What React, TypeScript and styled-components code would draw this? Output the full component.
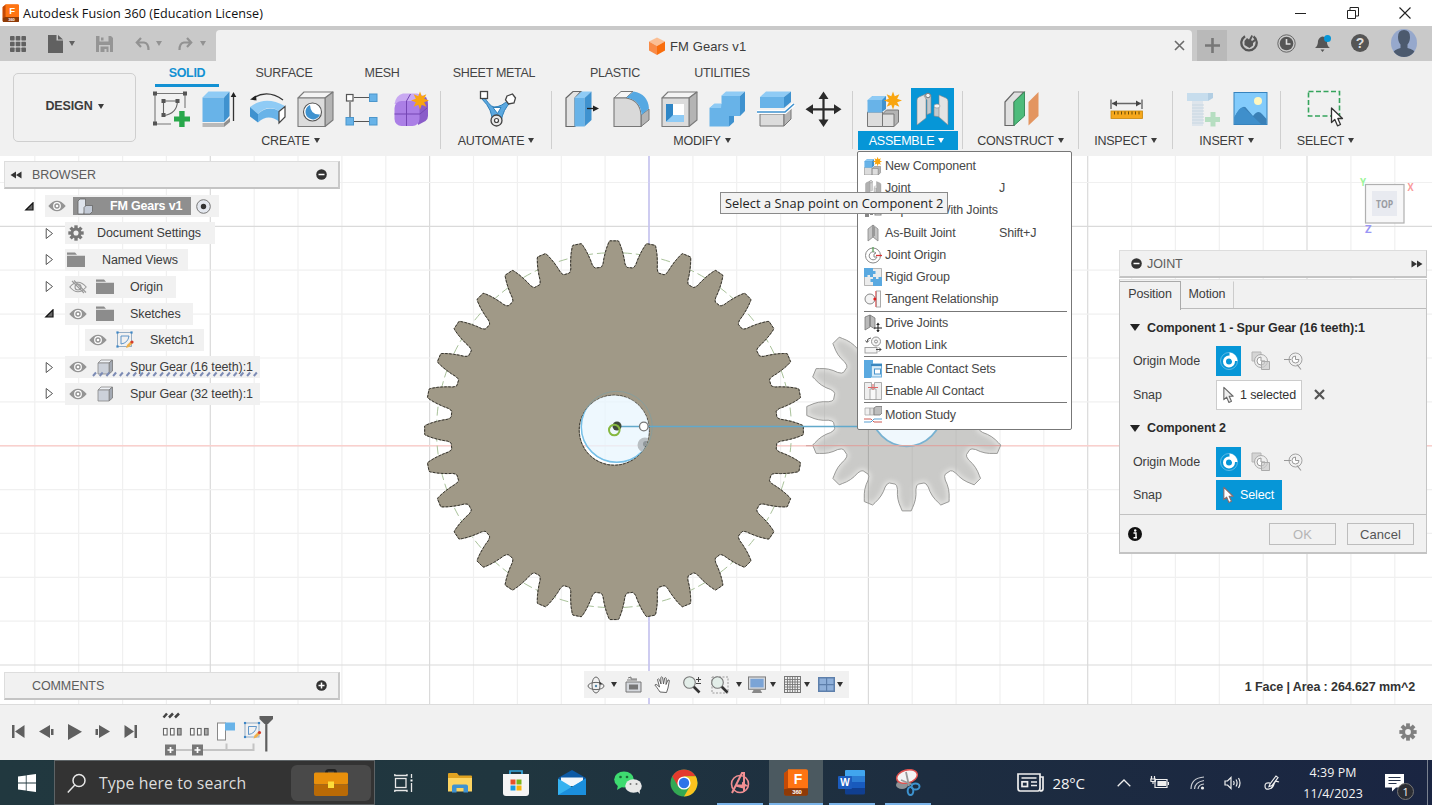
import React from 'react';
import styled, { createGlobalStyle } from 'styled-components';

const UI = '"Liberation Sans", Arial, sans-serif';
const SEGOE = '"Open Sans", "Noto Sans", sans-serif';
const BLUE = '#0696d7';
const SKY = '#68b3e8';

const Global = createGlobalStyle`
  *, *::before, *::after { box-sizing: border-box; }
  body { margin: 0; background: #fff; overflow: hidden; }
  svg { display: block; flex: none; }
`;

const Screen = styled.div`
  width: 1432px;
  height: 805px;
  display: flex;
  flex-direction: column;
  font-family: ${UI};
  font-size: 12.5px;
  letter-spacing: -0.1px;
  color: #3c3c3c;
  white-space: nowrap;
  overflow: hidden;
`;

/* ---------- window title bar ---------- */

const TitleBar = styled.header`
  height: 26px;
  flex: none;
  display: flex;
  align-items: center;
  padding: 0 1px 0 2px;
  background: #fff;
`;

const WindowTitle = styled.span`
  margin-left: 4px;
  font: 12.6px ${SEGOE};
  letter-spacing: 0.05px;
  color: #111;
  flex: 1;
`;

const WindowButton = styled.div`
  width: 52px;
  display: flex;
  justify-content: center;
`;

/* ---------- document bar ---------- */

const DocBar = styled.div`
  height: 35px;
  flex: none;
  display: flex;
  align-items: stretch;
  padding-top: 4px;
  background: #c9c9c9;
`;

const QuickAccess = styled.div`
  width: 216px;
  padding-bottom: 4px;
  display: flex;
  align-items: center;
`;

const QuickSlot = styled.div<{ $w: number }>`
  width: ${p => p.$w}px;
  display: flex;
  justify-content: center;
`;

const DocTab = styled.div`
  width: 976px;
  background: #f1f1f1;
  border-radius: 4px 4px 0 0;
  display: flex;
  align-items: center;
  padding-left: 432px;
`;

const DocName = styled.span`
  margin-left: 4px;
  font-size: 13px;
  letter-spacing: 0.1px;
  width: 504px;
  padding-top: 1px;
`;

const NewTab = styled.div`
  width: 30px;
  margin-left: 5px;
  background: #b9b9b9;
  display: flex;
  align-items: center;
  justify-content: center;
`;

const DocTools = styled.div`
  flex: 1;
  padding-bottom: 5px;
  display: flex;
  align-items: center;
`;

/* ---------- ribbon ---------- */

const Ribbon = styled.div`
  height: 95px;
  flex: none;
  display: flex;
  background: #f1f1f1;
`;

const WorkspaceButton = styled.div`
  width: 123px;
  height: 69px;
  margin: 12px 0 0 13px;
  border: 1.5px solid #cfcfcf;
  border-radius: 5px;
  display: flex;
  align-items: center;
  justify-content: center;
  font-weight: bold;
  font-size: 12.5px;
  letter-spacing: -0.15px;
  padding-bottom: 3px;
`;

const RibbonMain = styled.div`
  display: flex;
  flex-direction: column;
  margin-left: 5px;
`;

const TabRow = styled.div`
  height: 27px;
  display: flex;
  padding-left: 14px;
`;

const RibbonTab = styled.div<{ $w: number; $on?: boolean }>`
  width: ${p => p.$w}px;
  height: 26px;
  display: flex;
  align-items: center;
  justify-content: center;
  letter-spacing: -0.3px;
  padding-top: 1px;
  font-weight: ${p => (p.$on ? 'bold' : 'normal')};
  color: ${p => (p.$on ? '#1391d3' : '#444')};
  border-bottom: 3px solid ${p => (p.$on ? '#1391d3' : 'transparent')};
`;

const Groups = styled.div`
  display: flex;
`;

const Group = styled.div<{ $w: number }>`
  width: ${p => p.$w}px;
  height: 63px;
  display: flex;
  flex-direction: column;
  align-items: center;
  background: linear-gradient(#cfcfcf, #cfcfcf) right 3px / 1.5px 58px no-repeat;
  &:last-child { background: none; }
`;

const IconRow = styled.div`
  height: 43px;
  display: flex;
`;

const GroupLabel = styled.div<{ $on?: boolean }>`
  height: 19px;
  display: flex;
  align-items: center;
  letter-spacing: -0.22px;
  padding-right: 1px;
  color: ${p => (p.$on ? '#fff' : '#3c3c3c')};
  background: ${p => (p.$on ? BLUE : 'none')};
  ${p => (p.$on ? 'width: 100px; justify-content: center; padding-right: 3px;' : '')}
`;

const Caret = styled.i<{ $ml?: number; $s?: number }>`
  width: 0;
  height: 0;
  margin-left: ${p => p.$ml ?? 4}px;
  border: ${p => p.$s ?? 3.5}px solid transparent;
  border-top: ${p => (p.$s ?? 3.5) + 1.5}px solid currentColor;
  border-bottom: 0;
`;

/* ---------- canvas ---------- */

const Canvas = styled.main`
  height: 548px;
  flex: none;
  position: relative;
  background: #fff;
`;

const BrowserPanel = styled.section`
  position: absolute;
  left: 4px;
  top: 5px;
  width: 336px;
`;

const PanelBar = styled.div`
  height: 28px;
  display: flex;
  align-items: center;
  background: #f1f1f1;
  border: 1px solid #ddd;
  border-bottom: 2px solid #c4c4c4;
  border-right: 2px solid #c9c9c9;
  color: #5c5c5c;
  padding: 0 11px 0 5px;
`;

const PanelTitle = styled.span<{ $ml: number }>`
  flex: 1;
  margin-left: ${p => p.$ml}px;
`;

const Tree = styled.div`
  padding-top: 4px;
`;

const TreeRow = styled.div<{ $indent: number }>`
  height: 26.8px;
  display: flex;
  align-items: center;
  padding-left: ${p => p.$indent}px;
`;

const Twisty = styled.span`
  width: 21px;
  display: flex;
`;

const TreeItem = styled.div<{ $w: number }>`
  width: ${p => p.$w}px;
  height: 22px;
  background: #f1f1f1;
  display: flex;
  align-items: center;
  position: relative;
`;

const IconSlot = styled.span<{ $w: number }>`
  width: ${p => p.$w}px;
  display: flex;
  justify-content: center;
  flex: none;
`;

const ActiveName = styled.span`
  width: 118px;
  height: 18px;
  background: #8f8f8f;
  color: #fff;
  font-weight: bold;
  letter-spacing: -0.2px;
  display: flex;
  align-items: center;
`;

const Grounded = styled.svg`
  position: absolute;
  left: 27px;
  bottom: 1px;
`;

const CommentsPanel = styled(PanelBar)`
  position: absolute;
  left: 4px;
  top: 516px;
  width: 336px;
`;

const NavBar = styled.div`
  position: absolute;
  left: 584px;
  top: 515px;
  width: 265px;
  height: 27px;
  background: #f1f1f1;
  display: flex;
  align-items: center;
  color: #333;
`;

const Status = styled.div`
  position: absolute;
  right: 17px;
  top: 524px;
  font-weight: bold;
  line-height: 15px;
  color: #333;
`;

const ViewCube = styled.svg`
  position: absolute;
  left: 1352px;
  top: 16px;
`;

const Menu = styled.ul`
  position: absolute;
  left: 857px;
  top: -5px;
  width: 215px;
  height: 279px;
  margin: 0;
  padding: 2.5px 4px 0 6px;
  list-style: none;
  background: #fff;
  border: 1.5px solid #777;
  border-radius: 2px;
`;

const MenuItem = styled.li`
  height: 22.3px;
  display: flex;
  align-items: center;
  letter-spacing: -0.18px;
  color: #484848;
`;

const MenuText = styled.span`
  width: 114px;
  margin-left: 3px;
`;

const MenuRule = styled.li`
  height: 1px;
  margin-bottom: 0.3px;
  background: #777;
`;

const Tooltip = styled.div`
  position: absolute;
  left: 720px;
  top: 36px;
  width: 228px;
  height: 22px;
  padding-left: 4px;
  background: #f2f2f2;
  border: 1px solid #8a8a8a;
  font: 12.8px/20px ${SEGOE};
  letter-spacing: 0.05px;
  color: #222;
`;

/* ---------- joint dialog ---------- */

const JointPanel = styled.section`
  position: absolute;
  left: 1119px;
  top: 94px;
  width: 308px;
`;

const JointBar = styled(PanelBar)`
  height: 28px;
  border-right-width: 1px;
  padding: 0 3px 0 11px;
`;

const JointBody = styled.div`
  height: 275px;
  margin-top: 1px;
  background: #f1f1f1;
  border: 1px solid #c4c4c4;
  border-top-color: #e2e2e2;
  border-bottom-width: 2px;
`;

const JointTabs = styled.div`
  height: 29px;
  display: flex;
  border-bottom: 1.5px solid #bbb;
`;

const JointTab = styled.div<{ $w: number; $on?: boolean }>`
  width: ${p => p.$w}px;
  height: ${p => (p.$on ? 29 : 27)}px;
  margin-top: 1px;
  border-top: 1px solid ${p => (p.$on ? '#aaa' : 'transparent')};
  border-right: 1px solid ${p => (p.$on ? '#aaa' : '#ccc')};
  background: #f1f1f1;
  display: flex;
  align-items: center;
  justify-content: center;
  padding-bottom: ${p => (p.$on ? 5 : 3)}px;
`;

const Fields = styled.div`
  height: 206px;
  padding-top: 2px;
  border-bottom: 1.5px solid #c2c2c2;
`;

const SectionHead = styled.div`
  height: 33.5px;
  display: flex;
  align-items: center;
  font-weight: bold;
  color: #2b2b2b;
  padding-left: 10px;
`;

const HeadArrow = styled.i`
  border: 5px solid transparent;
  border-top: 7px solid #222;
  border-bottom: 0;
  margin-right: 7px;
`;

const Field = styled.div`
  height: 33.5px;
  display: flex;
  align-items: center;
  padding-left: 13px;
`;

const FieldName = styled.span`
  width: 83px;
`;

const ModeButton = styled.span<{ $on?: boolean }>`
  width: ${p => (p.$on ? 25 : 33)}px;
  height: 30px;
  background: ${p => (p.$on ? BLUE : 'none')};
  padding-left: ${p => (p.$on ? 0 : 6)}px;
  display: flex;
  align-items: center;
  justify-content: center;
`;

const PickButton = styled.span<{ $on?: boolean }>`
  width: ${p => (p.$on ? 66 : 86)}px;
  height: 30px;
  background: ${p => (p.$on ? BLUE : '#fff')};
  color: ${p => (p.$on ? '#fff' : '#333')};
  border: 1px solid ${p => (p.$on ? BLUE : '#ccc')};
  display: flex;
  align-items: center;
  gap: 6px;
  padding-left: 6px;
`;

const ClearPick = styled.svg`
  margin-left: 12px;
`;

const Footer = styled.div`
  height: 38px;
  display: flex;
  align-items: center;
  padding: 0 12px 0 8px;
`;

const DialogButton = styled.span<{ $off?: boolean }>`
  width: 67px;
  height: 22px;
  border: 1.5px solid #bdbdbd;
  margin-left: ${p => (p.$off ? 'auto' : '11px')};
  display: flex;
  align-items: center;
  justify-content: center;
  font-size: 13px;
  letter-spacing: 0.1px;
  color: ${p => (p.$off ? '#b5b5b5' : '#555')};
`;

/* ---------- timeline ---------- */

const Timeline = styled.div`
  height: 56px;
  flex: none;
  display: flex;
  align-items: center;
  background: #f1f1f1;
  border-top: 1px solid #dcdcdc;
  padding: 0 15px 2px 5px;
`;

const Transport = styled.div`
  display: flex;
  width: 155px;
`;

const TransportButton = styled.span`
  width: 28px;
  display: flex;
  justify-content: center;
`;

const Spacer = styled.span`
  flex: 1;
`;

/* ---------- taskbar ---------- */

const Taskbar = styled.footer`
  height: 45px;
  flex: none;
  display: flex;
  background: linear-gradient(90deg, #21383f 0%, #20363f 35%, #1d2d40 65%, #1a2542 100%);
  color: #f4f4f4;
  font-family: ${SEGOE};
`;

const StartButton = styled.div`
  width: 54px;
  display: flex;
  align-items: center;
  justify-content: center;
`;

const SearchBox = styled.div`
  width: 321px;
  border: 1.5px solid #5d6366;
  background: #333;
  display: flex;
  align-items: center;
  padding: 0 3px 0 12px;
  margin-right: 0.6px;
`;

const SearchText = styled.span`
  flex: 1;
  margin-left: 13px;
  font-size: 15.8px;
  letter-spacing: 0.1px;
  color: #ddd;
`;

const SearchArt = styled.span`
  width: 80px;
  height: 36px;
  border-radius: 6px;
  background: #494949;
  display: flex;
  align-items: center;
  justify-content: center;
`;

const TaskSlot = styled.div<{ $open?: boolean; $active?: boolean }>`
  width: 56px;
  position: relative;
  display: flex;
  align-items: center;
  justify-content: center;
  background: ${p => (p.$active ? 'linear-gradient(90deg,transparent 1px,#4b5960 1px,#4b5960 55px,transparent 55px)' : 'none')};
  &::after {
    content: '';
    position: absolute;
    bottom: 0;
    left: ${p => (p.$active ? 1 : 5)}px;
    right: ${p => (p.$active ? 1 : 5)}px;
    height: ${p => (p.$open ? 2.5 : 0)}px;
    background: #7ab3e8;
  }
`;

const Tray = styled.div`
  flex: 1;
  display: flex;
  align-items: center;
  padding-left: 81px;
`;

const Temperature = styled.span`
  width: 57.5px;
  margin-left: 9px;
  font-size: 15px;
  letter-spacing: -0.2px;
`;

const TraySlot = styled.span<{ $w: number }>`
  width: ${p => p.$w}px;
  display: flex;
  justify-content: center;
`;

const Clock = styled.div`
  width: 84px;
  margin-left: -3px;
  text-align: center;
  font-size: 12.4px;
  line-height: 21px;
  letter-spacing: 0.1px;
`;

const Badge = styled.span`
  position: absolute;
  left: 12px;
  top: 9px;
  width: 17px;
  height: 17px;
  border-radius: 50%;
  background: #2b2d33;
  border: 1px solid #777;
  font-size: 11px;
  line-height: 15px;
  text-align: center;
`;

const Notice = styled.div`
  position: relative;
  margin-left: 10px;
  width: 36px;
`;

const ShowDesktop = styled.div`
  width: 5px;
  border-left: 1px solid #7a8290;
`;

/* ---------- drawings ---------- */

const Ico = ({ children, w = 48, h = 42 }: { children: React.ReactNode; w?: number; h?: number }) => (
  <svg width={w} height={h} viewBox={`0 0 ${w} ${h}`} fill="none">{children}</svg>
);

const starPoints = (cx: number, cy: number, R: number, r: number, n = 8) =>
  Array.from({ length: n * 2 }, (_, i) => {
    const a = (Math.PI * i) / n - Math.PI / 2;
    const q = i % 2 ? r : R;
    return `${(cx + q * Math.cos(a)).toFixed(2)},${(cy + q * Math.sin(a)).toFixed(2)}`;
  }).join(' ');

const Star = ({ x, y, r }: { x: number; y: number; r: number }) => (
  <polygon points={starPoints(x, y, r, r * 0.5)} fill="#f9a50f" />
);

const FusionLogo = ({ s }: { s: number }) => (
  <svg width={s} height={s * 1.1} viewBox="0 0 25 27">
    <path d="M1 4l4-3h18a2 2 0 0 1 2 2v19l-3 4H3a2 2 0 0 1-2-2z" fill="#e8590c" />
    <path d="M5 0h18a2 2 0 0 1 2 2v17H5z" fill="#ff7412" />
    <path d="M1 4l4-3v18l-4 1z" fill="#c44a06" />
    <path d="M1 20l4-1h20v5a2 2 0 0 1-2 2.500H3a2 2 0 0 1-2-2z" fill="#8f3a06" />
    <text x="15" y="15" fontFamily="Liberation Sans" fontWeight="bold" fontSize="14" fill="#fff" textAnchor="middle">F</text>
    <text x="14" y="25" fontFamily="Liberation Sans" fontWeight="bold" fontSize="6" fill="#fff" textAnchor="middle">360</text>
  </svg>
);

const SketchIcon = () => (
  <Ico>
    <path d="M8 5.500H38V20M8 5.500V36H24" stroke="#777" strokeWidth="1.100" />
    <path d="M16.500 13H30.500Q30 26 16.500 27.500Z" stroke="#666" strokeWidth="1.100" />
    {[[8, 5.5], [38, 5.5], [8, 35.5], [16.5, 13], [30.5, 13], [16.500, 27]].map(([x, y]) => (
      <rect key={`${x}-${y}`} x={x - 2} y={y - 2} width="4" height="4" fill="#555" />
    ))}
    <path d="M32.200 23h5.400v5.400H43v5.200h-5.400V39h-5.400v-5.400H27v-5.200h5.200z" fill="#28a84b" />
  </Ico>
);

const ExtrudeIcon = () => (
  <Ico>
    <path d="M7.500 35l21.500 0v4H7.500z" fill="#b9b9b9" />
    <path d="M29 35l6-5v4l-6 5z" fill="#8f8f8f" />
    <path d="M7.500 9.500l6-6h21l-5.500 6z" fill="#8fcbf5" />
    <path d="M7.500 9.500H29V34H7.500z" fill={SKY} />
    <path d="M29 9.500l5.500-6V28L29 34z" fill="#3f92cf" />
    <path d="M38.500 33V7" stroke="#333" strokeWidth="1.300" />
    <path d="M38.500 4l2.800 5h-5.600z" fill="#222" />
  </Ico>
);

const RevolveIcon = () => (
  <Ico>
    <path d="M40 12Q25 1 10 10" stroke="#333" strokeWidth="1.300" />
    <path d="M7 11.500l6-4 .5 5z" fill="#222" />
    <path d="M7 19Q22 7 42 18l-6 5Q25 16 15 26z" fill="#8fcbf5" />
    <path d="M7 19l8 7v8.500l-8-6z" fill="#3f92cf" />
    <path d="M15 26Q25 17 36 23v10.500Q25 25 15 34.500z" fill={SKY} />
    <path d="M36 23.500l6-5V29l-6 6z" fill="#fff" stroke="#444" strokeWidth="1.200" />
  </Ico>
);

const GreyBox = () => (
  <g stroke="#7a7a7a" strokeWidth="1.100" strokeLinejoin="round">
    <path d="M7 10l6-6H42L34 10z" fill="#f4f4f4" />
    <path d="M34 10L42 4V32L34 38.500z" fill="#b4b4b4" />
    <path d="M7 10H34V38.500H7z" fill="#dcdcdc" />
  </g>
);

const HoleIcon = () => (
  <Ico>
    <GreyBox />
    <circle cx="21.500" cy="24" r="9" fill="#fff" stroke="#555" strokeWidth="1.100" />
    <path d="M19 17a7.500 7.500 0 1 0 10 9.500Q19.500 27 19 17z" fill="#3f92cf" />
  </Ico>
);

const PatternIcon = () => (
  <Ico>
    <path d="M15 9.500H30M11 14V30M15 33.500H30" stroke="#555" strokeWidth="1.200" />
    <rect x="7.500" y="6.500" width="6.500" height="6.500" fill="#fff" stroke="#555" strokeWidth="1.200" />
    <rect x="30.500" y="6" width="7.500" height="7.500" fill={SKY} stroke="#4b96cc" />
    <rect x="7" y="29.500" width="7.500" height="7.500" fill={SKY} stroke="#4b96cc" />
    <rect x="30.500" y="29.500" width="7.500" height="7.500" fill={SKY} stroke="#4b96cc" />
  </Ico>
);

const FormIcon = () => (
  <Ico>
    <path d="M30 12l9-3q2 3 2 8v11q0 3-2.500 5L31 37z" fill="#8a5cc9" />
    <path d="M7.500 16Q9 7 16 5.500h14q6 1 8 4l-6 6z" fill="#c9a9f2" />
    <rect x="7.500" y="13" width="25" height="25" rx="7" fill="#ab7fe6" />
    <path d="M19.500 13V38M7.500 26H33l7-6M19.500 13l4-7" stroke="#7546b3" />
    <Star x={33} y={12.5} r={9} />
  </Ico>
);

const AutomateIcon = () => (
  <Ico>
    <path d="M11 8Q16 18 21 19Q29 19 36 11L38 14Q30 21 28 34H19Q20 22 9 11z" fill="#5ba8e0" stroke="#2f7fb8" />
    <path d="M20 19.500h8l-3.500 6z" fill="#fff" stroke="#2f7fb8" />
    <rect x="7.500" y="3.500" width="7" height="7" fill="#fff" stroke="#444" strokeWidth="1.300" />
    <path d="M34 8l5.500-2 3 4-1.500 5-5.500 1-3-4z" fill="#fff" stroke="#444" strokeWidth="1.300" />
    <circle cx="23.500" cy="32.500" r="5.500" fill="#e8e8e8" stroke="#444" strokeWidth="1.300" />
    <circle cx="23.500" cy="32.500" r="2" fill="#fff" stroke="#444" strokeWidth="1.200" />
  </Ico>
);

const PressPullIcon = () => (
  <Ico>
    <path d="M7 10l7-6.500h8L16 10V38.500H7z" fill="#e3e3e3" stroke="#666" strokeWidth="1.200" />
    <path d="M15.500 10l7-6.500H32.500l-7 6.500z" fill="#8fcbf5" />
    <path d="M15.500 10h10V38.500h-10z" fill={SKY} />
    <path d="M25.500 10l7-6.500V32l-7 6.500z" fill="#3f92cf" />
    <path d="M28 20.500h8" stroke="#222" strokeWidth="1.300" />
    <path d="M34 17.500l6 3-6 3z" fill="#222" />
  </Ico>
);

const FilletIcon = () => (
  <Ico>
    <path d="M34 27l8-6v11l-8 6.500z" fill="#b4b4b4" stroke="#777" />
    <path d="M7 10l7-6.500H26L19 10z" fill="#f6f6f6" stroke="#777" />
    <path d="M7 10h12Q33 12 34 27V38.500H7z" fill="#d9d9d9" stroke="#777" strokeWidth="1.100" />
    <path d="M19.500 9.500l7-6Q41 6 42 20.500L34.500 27Q34 12.500 19.500 9.500z" fill="#55a8e2" />
  </Ico>
);

const ShellIcon = () => (
  <Ico>
    <GreyBox />
    <rect x="11" y="16" width="18" height="18" fill="#fff" />
    <path d="M11 16h7v12l-7 6z" fill="#2f86c6" />
    <path d="M11 34l7-7h11v7z" fill="#8fcbf5" />
  </Ico>
);

const CombineIcon = () => (
  <Ico>
    <path d="M18 8l5-4.500H42L37 8z" fill="#8fcbf5" />
    <path d="M37 8l5-4.500V23l-5 5H31v6l-5 4.500V28z" fill="#3f92cf" />
    <path d="M6.500 20l5-4h7v-8H37V28H26V38.500H6.500z" fill={SKY} />
    <path d="M6.500 20l5-4.500h7L18 20z" fill="#8fcbf5" />
  </Ico>
);

const SplitIcon = () => (
  <Ico>
    <path d="M9 26h24v12H9z" fill="#dcdcdc" stroke="#777" />
    <path d="M33 26l7-6v11l-7 7z" fill="#b4b4b4" stroke="#777" />
    <path d="M9 9l6-5.500H40L33 9z" fill="#8fcbf5" />
    <path d="M9 9h24v11H9z" fill={SKY} />
    <path d="M33 9l7-5.500V14l-7 6z" fill="#3f92cf" />
    <path d="M6 24H34L43 16" stroke="#fff" strokeWidth="4" />
    <path d="M6 24H34L43 16" stroke="#3f92cf" strokeWidth="1.600" />
  </Ico>
);

const MoveIcon = () => (
  <Ico>
    <path d="M24.500 8V35M11 21.300H38" stroke="#2b2b2b" strokeWidth="2.200" />
    <path d="M24.500 3.500l5 7.500h-10zM24.500 39l5-7.500h-10zM6.500 21.300l7.500-5v10zM42.500 21.300l-7.500-5v10z" fill="#2b2b2b" />
  </Ico>
);

const NewComponentArt = () => (
  <>
    <path d="M7.500 24h15v14.500h-15z" fill="#dcdcdc" stroke="#777" />
    <path d="M22.500 26l4-4H38.500v12l-4.500 4.500H22.500z" fill="#b4b4b4" stroke="#777" />
    <path d="M22.500 26H34V38.500H22.500z" fill="#dedede" stroke="#777" />
    <path d="M7.500 13l5-5H26v13l-4 3z" fill="#3f92cf" />
    <path d="M7.500 12l5-4H26l-4 4z" fill="#8fcbf5" />
    <path d="M7.500 12H22V24.500H7.500z" fill={SKY} />
    <Star x={33} y={12.5} r={9} />
  </>
);

const JointArt = ({ dark }: { dark?: boolean }) => {
  const a = dark ? '#b0b0b0' : '#e3e3e3';
  const b = dark ? '#d0d0d0' : '#c3c9cd';
  return (
    <>
      <path d="M9 12q0-2 2-3l7-3v24l-9 7z" fill={a} stroke="#888" strokeWidth=".6" />
      <path d="M16 8q4-5 7-1v18l-4 1.500V12z" fill={b} stroke="#888" strokeWidth=".6" />
      <circle cx="20" cy="7.500" r="2.300" fill="#f4f4f4" stroke="#777" />
      <path d="M26 20q3-6 6-1v10l-6-1z" fill={b} stroke="#888" strokeWidth=".6" />
      <path d="M31 7l7 3q2 1 2 3v24l-9-8z" fill={a} stroke="#888" strokeWidth=".6" />
      <ellipse cx="29" cy="18" rx="3" ry="2" fill="#f4f4f4" stroke="#888" strokeWidth=".6" />
    </>
  );
};

const JointTileIcon = () => (
  <Ico>
    <rect x="3" y="0" width="43" height="42" fill={BLUE} />
    <JointArt />
  </Ico>
);

const ConstructIcon = () => (
  <Ico>
    <path d="M8 14l9-10h10L17 14V37.500H8z" fill="#e0e0e0" stroke="#666" strokeWidth="1.200" />
    <path d="M17 14L27.500 4V28L17 37.500z" fill="#4dbb7b" stroke="#3a8f5c" />
    <path d="M31.500 14L41.500 4V28l-10 9.500z" fill="#e39560" />
  </Ico>
);

const InspectIcon = () => (
  <Ico>
    <path d="M9 11.500V21M40 11.500V21M10 15.500H39" stroke="#666" strokeWidth="1.400" />
    <path d="M10 15.500l5-3v6zM39 15.500l-5-3v6z" fill="#444" />
    <rect x="9" y="23" width="31.500" height="7.500" fill="#f6a81c" stroke="#c98609" strokeWidth=".8" />
    <path d="M12.500 23.500v3M16 23.500v3M19.500 23.500v3M23 23.500v3M26.500 23.500v3M30 23.500v3M33.500 23.500v3M37 23.500v3" stroke="#6b4c05" />
  </Ico>
);

const BoltIcon = () => (
  <Ico>
    <g opacity=".55">
      <path d="M8 5h21v8H8z" fill="#a5cdea" />
      <path d="M29 5h5v5l-5 3z" fill="#7fb2d8" />
      <path d="M13 13h11v25H13z" fill="#cfdde8" />
      <path d="M13 17h12M13 20h12M13 23h12M13 26h12M13 29h12M13 32h12M13 35h12" stroke="#a9c2d6" />
      <path d="M31.500 24h5v5H41v5h-4.500v4.500h-5V34H26v-5h5.500z" fill="#86cf9a" />
    </g>
  </Ico>
);

const ImageIcon = () => (
  <Ico>
    <rect x="7" y="4.500" width="33" height="32" fill="#83cbfb" stroke="#3783bd" />
    <path d="M7.500 29Q16 14 20 21l6 7q5-7 9-2l4.500 5V36H7.500z" fill="#3a80b7" />
    <path d="M7.500 29Q14 16 18 21l16 15H7.500z" fill="#3f8fcb" />
    <circle cx="31" cy="13" r="4" fill="#fff7c0" />
  </Ico>
);

const CursorShape = ({ x, y, fill = '#fff', stroke = '#333' }: { x: number; y: number; fill?: string; stroke?: string }) => (
  <path transform={`translate(${x} ${y})`} d="M0 0V14.500l3.300-3 2.700 6.300 3-1.300-2.700-6H11z" fill={fill} stroke={stroke} strokeWidth="1.300" strokeLinejoin="round" />
);

const SelectIcon = () => (
  <Ico>
    <rect x="6.500" y="3.500" width="31" height="24.500" stroke="#35a45c" strokeWidth="1.600" strokeDasharray="5 2.500" />
    <CursorShape x={29.5} y={20} />
  </Ico>
);

const Eye = ({ off }: { off?: boolean }) => (
  <svg width="18" height="14" viewBox="0 0 18 14" fill="none">
    {off ? (
      <g stroke="#999" strokeWidth="1.100">
        <path d="M.8 7Q9-2.500 17.200 7Q9 16.500 .8 7z" />
        <circle cx="9" cy="7" r="3" />
        <path d="M3 1l12 12M5 .5l12 12" />
      </g>
    ) : (
      <g>
        <path d="M.3 7Q9-3.500 17.700 7Q9 17.500 .3 7z" fill="#949494" />
        <circle cx="9" cy="7" r="3.300" fill="none" stroke="#fff" strokeWidth="1.200" />
        <circle cx="9" cy="7" r="1.300" fill="#fff" />
      </g>
    )}
  </svg>
);

const Folder = () => (
  <svg width="18" height="15" viewBox="0 0 18 15"><path d="M0 .5h8l2 2.300H0zM0 3.800h18V15H0z" fill="#8c8c8c" /></svg>
);

const Gear = ({ s, c = '#777' }: { s: number; c?: string }) => (
  <svg width={s} height={s} viewBox="-10 -10 20 20">
    {[0, 45, 90, 135].map(a => <rect key={a} x="-2.100" y="-9.600" width="4.200" height="19.200" fill={c} transform={`rotate(${a})`} />)}
    <circle r="6.800" fill={c} /><circle r="3.200" fill="#f1f1f1" />
  </svg>
);

const Body = () => (
  <svg width="17" height="16" viewBox="0 0 17 16">
    <path d="M1 4l3-3h11l-3 3z" fill="#eef1f5" stroke="#888" strokeWidth=".8" />
    <path d="M12 4l3.500-3v11L12 15z" fill="#a3a9b3" stroke="#777" strokeWidth=".8" />
    <path d="M1 4h11v11H1z" fill="#ccd1da" stroke="#888" strokeWidth=".8" />
  </svg>
);

const AssemblyIcon = () => (
  <svg width="17" height="17" viewBox="0 0 17 17">
    <path d="M1 3l2-2h5.500v7L7 16H1z" fill="#dfe4ec" stroke="#666" strokeWidth=".8" />
    <path d="M7 9.500l2-2h6.500V13.500L13 16H7z" fill="#c3cad6" stroke="#666" strokeWidth=".8" />
  </svg>
);

const SketchSmall = () => (
  <svg width="18" height="18" viewBox="0 0 18 18" fill="none">
    <rect x="1.500" y="1.500" width="14" height="14" stroke="#8aa6c0" strokeWidth=".9" />
    <path d="M5 5h8Q12 12 5 13z" stroke="#4f8bc4" strokeWidth=".9" />
    {[[1.5, 1.5], [15.5, 1.5], [1.5, 15.5]].map(([x, y]) => <rect key={`${x}${y}`} x={x - 1.1} y={y - 1.1} width="2.200" height="2.200" fill="#3d86c6" />)}
    <path d="M10 17l1-3 4-4 2 2-4 4z" fill="#efb04a" /><circle cx="16" cy="11" r="1.600" fill="#d43c2c" />
  </svg>
);

const ArrowClosed = () => (
  <svg width="10" height="13" viewBox="-1 0 10 13"><path d="M1.200 1.500L7.500 6.500L1.200 11.500z" fill="#fff" stroke="#555" /></svg>
);
const ArrowOpen = () => (
  <svg width="10" height="9" viewBox="-1 0 10 9"><path d="M8 .8V8H.8z" fill="#666" stroke="#111" strokeWidth="1.200" /></svg>
);

const RoundSign = ({ plus }: { plus?: boolean }) => (
  <svg width="11" height="11" viewBox="0 0 11 11"><circle cx="5.500" cy="5.500" r="5.300" fill="#333" /><path d={plus ? 'M2.500 5.500h6M5.500 2.500v6' : 'M2.500 5.500h6'} stroke="#fff" strokeWidth="1.500" /></svg>
);

const DoubleArrow = ({ flip }: { flip?: boolean }) => (
  <svg width="12" height="8" viewBox="0 0 12 8"><path transform={flip ? 'translate(12 0) scale(-1 1)' : undefined} d="M6 .5v7L.5 4zM11.500 .5v7L6 4z" fill="#333" /></svg>
);

/* Outline of a spur gear: each tooth is a list of (radius, half width) pairs. */
const gearPath = (cx: number, cy: number, teeth: number, profile: number[][]) => {
  const pts: string[] = [];
  for (let i = 0; i < teeth; i++) {
    const base = -Math.PI / 2 + (i * 2 * Math.PI) / teeth;
    const side = (s: number) => ([r, w]: number[]) => {
      const a = base + s * Math.asin(w / r);
      pts.push(`${(cx + r * Math.cos(a)).toFixed(2)} ${(cy + r * Math.sin(a)).toFixed(2)}`);
    };
    profile.forEach(side(-1));
    [...profile].reverse().forEach(side(1));
  }
  return `M${pts.join('L')}Z`;
};

const BIG = gearPath(614, 430.2, 32, [
  [163.3, 13.2], [164.5, 12], [167, 10.9], [172, 10.100], [177.500, 8.800], [182, 7.500], [186, 6], [188.4, 5], [189.4, 4.200],
]);
const SMALL = gearPath(906.7, 411, 16, [
  [74, 11.5], [75.5, 10], [79, 9.2], [84, 9.3], [88.8, 8.700], [93, 7.500], [97, 5.800], [100, 4.500],
]);
const circlePath = (x: number, y: number, r: number) => `M${x - r} ${y}a${r} ${r} 0 1 0 ${2 * r} 0a${r} ${r} 0 1 0 ${-2 * r} 0Z`;

const Model = () => {
  const step = 43.87;
  const vs = Array.from({ length: 33 }, (_, i) => i - 14);
  const hs = Array.from({ length: 12 }, (_, i) => i - 6);
  return (
    <svg width="1432" height="548" viewBox="0 156 1432 548" fill="none">
      <defs>
        <clipPath id="small-clip"><path d={SMALL} /></clipPath>
        <clipPath id="bore-clip"><circle cx="614.200" cy="430.200" r="35" /></clipPath>
        <filter id="soft" x="-10%" y="-10%" width="120%" height="120%"><feGaussianBlur stdDeviation="2" /></filter>
      </defs>
      {vs.map(i => <path key={`v${i}`} d={`M${(649 + i * step).toFixed(1)} 156V704`} stroke={i % 5 ? '#f0f0f0' : '#dadada'} strokeWidth="1.200" />)}
      {hs.map(i => <path key={`h${i}`} d={`M0 ${(445.7 + i * step).toFixed(1)}H1432`} stroke={i % 5 ? '#f0f0f0' : '#dadada'} strokeWidth="1.200" />)}
      <path d="M649 156V704" stroke="#bdb9f6" strokeWidth="1.200" />
      <path d="M0 445.700H1432" stroke="#fad0cd" strokeWidth="1.500" />

      <circle cx="614" cy="430.200" r="177.500" stroke="#a9c29a" strokeDasharray="9 4" />
      <path d={BIG + circlePath(614.2, 430.2, 35)} fillRule="evenodd" fill="#a09987" stroke="#7d7769" strokeWidth=".8" />
      <path d={BIG + circlePath(614.2, 430.2, 35)} stroke="#2e2c26" strokeWidth=".9" strokeDasharray="2.500 1.500" />
      <circle cx="616.800" cy="426.800" r="35.500" stroke="#6f9fae" strokeOpacity=".5" />
      <g clipPath="url(#bore-clip)">
        <circle cx="616.800" cy="426.800" r="35.500" fill="#e8f5fd" fillOpacity=".75" stroke="#76c0e8" strokeWidth="1.500" />
        <circle cx="645" cy="445" r="7.500" fill="#b9bfc3" />
        <circle cx="646" cy="444" r="3" fill="#8f9699" />
      </g>

      <path d={SMALL} fill="#c7c7c5" fillOpacity=".95" />
      <g clipPath="url(#small-clip)">
        <path d={SMALL} stroke="#e2e2e0" strokeWidth="5" filter="url(#soft)" />
        <path d="M868.400 300V520" stroke="#a2a2a0" strokeOpacity=".8" />
        <path d="M824.500 300V520M912.300 300V520M956 300V520" stroke="#bdbdbb" strokeOpacity=".6" />
      </g>
      <path d={SMALL} stroke="#9b9b99" />
      <circle cx="906.700" cy="411" r="35.300" fill="#f0f8fd" stroke="#77b2d2" strokeWidth="1.800" />
      <path d="M806 445.700H1000" stroke="#dba7a3" strokeWidth="1.200" />

      <path d="M620 426.500H907" stroke="#62a9cb" strokeWidth="1.500" />
      <circle cx="643.800" cy="426.500" r="4.300" fill="#fff" stroke="#777" strokeWidth="1.300" />
      <circle cx="617" cy="426" r="4.500" fill="#3f4a3a" />
      <circle cx="614.300" cy="430" r="5.300" stroke="#86b840" strokeWidth="2" />
    </svg>
  );
};

const menuGlyphs: Record<string, React.ReactNode> = {
  comp: <g transform="translate(-3.500 -2) scale(.52)"><NewComponentArt /></g>,
  joint: <g transform="translate(-3 -1) scale(.5)"><JointArt dark /></g>,
  dup: <><path d="M1 7h4v9H1zM6 8h3v6H6z" fill="#888" /><rect x="11" y="9" width="6" height="5" fill="#ddd" stroke="#888" /></>,
  built: <><path d="M4 5l5-4v12l-5 4zM9 1l5 4v12l-5-4z" fill="#c4c4c4" stroke="#888" strokeWidth=".8" /><path d="M8 3h3v9H8z" fill="#999" /></>,
  origin: <><circle cx="9" cy="9.500" r="7.500" stroke="#888" fill="#fff" /><path d="M12 7a4 4 0 1 0 1 4h-3V8z" stroke="#888" fill="#fff" /><path d="M9 1v5" stroke="#5aa35a" strokeWidth="1.300" /><path d="M12 9.500h6" stroke="#d33" strokeWidth="1.300" /></>,
  rigid: <><path d="M.5.500H17.500V17.500H.5z" fill="#ececec" stroke="#999" strokeWidth=".7" /><path d="M0 0h9v3h2.500v3H9v3H6V7H3.500v2H0z" fill="#5aa9e0" /><path d="M9 18v-4H6.500v-3H9V9h3v2h2.500V9H18v9z" fill="#5aa9e0" /></>,
  tangent: <><circle cx="6" cy="9" r="5" fill="#f4f4f4" stroke="#888" /><rect x="12.500" y="1" width="4" height="16" fill="#f4f4f4" stroke="#aaa" /><path d="M11.800 1v16" stroke="#e05a5a" /><circle cx="10.800" cy="9" r="1.500" fill="#d22" /></>,
  drive: <><path d="M1 3l5-2v12l-5 3zM6 1l5 3v11l-5-3z" fill="#b9b9b9" stroke="#777" strokeWidth=".8" /><path d="M14 10v8M10 14h8" stroke="#222" strokeWidth="1.100" /><path d="M14 8.500l1.800 2.500h-3.600zM14 18l1.800-2h-3.600z" fill="#222" /></>,
  link: <><circle cx="12" cy="5.500" r="4.500" fill="#f4f4f4" stroke="#888" strokeWidth=".9" /><circle cx="12" cy="5.500" r="1.500" stroke="#888" strokeWidth=".9" /><path d="M3 6q0-4 4-4M1.500 4.500L3 6.500l2-2" stroke="#444" strokeWidth=".9" /><rect x="1" y="11.500" width="12" height="5.500" fill="#f4f4f4" stroke="#999" strokeWidth=".9" /><path d="M12 13.500h5M15 11.500l2 2-2 2" stroke="#333" strokeWidth=".9" /></>,
  sets: <><path d="M0 0h9v4H7v14H0z" fill="#5aa9e0" /><rect x="7.500" y="4" width="10" height="13" fill="#d8ecf8" stroke="#6aaedb" /><rect x="10.500" y="9" width="6" height="5" fill="#fff" stroke="#4a95cc" /><path d="M7 5h11" stroke="#3a86bd" strokeWidth="2.200" /></>,
  all: <><path d="M.5.500h7v17h-7zM10.500.500h7v17h-7z" fill="#efefef" stroke="#999" strokeWidth=".8" /><path d="M6 7h6v10.500H6z" fill="#f8f8f8" stroke="#999" strokeWidth=".8" /><path d="M4 5.500h10M9 2v6" stroke="#d66" strokeWidth="1.100" /></>,
  study: <><path d="M1 2h5v7H1z" fill="#f0f0f0" stroke="#aaa" strokeWidth=".8" /><path d="M6 2h4v7H6z" fill="#ddd" stroke="#aaa" strokeWidth=".8" /><path d="M10 2l2-1.500h6V7l-2 2h-6z" fill="#bdbdbd" stroke="#777" strokeWidth=".8" /><path d="M0 13h7l3 3h8" stroke="#cc5b55" /><path d="M0 16h7l3-3h8" stroke="#5a9fd0" /></>,
};

const menuItems: ([string, string, string?] | null)[] = [
  ['comp', 'New Component'], ['joint', 'Joint', 'J'], ['dup', 'Duplicate With Joints'], ['built', 'As-Built Joint', 'Shift+J'],
  ['origin', 'Joint Origin'], ['rigid', 'Rigid Group'], ['tangent', 'Tangent Relationship'], null,
  ['drive', 'Drive Joints'], ['link', 'Motion Link'], null, ['sets', 'Enable Contact Sets'], ['all', 'Enable All Contact'], null,
  ['study', 'Motion Study'],
];

const OriginModes = () => (
  <>
    <ModeButton $on>
      <svg width="20" height="20" viewBox="0 0 20 20" fill="none"><circle cx="10" cy="10" r="8.500" stroke="#5cb9e6" /><circle cx="10" cy="10.500" r="4.500" stroke="#fff" strokeWidth="3" /><path d="M10.500 1.500a8.500 8.500 0 0 1 8 8.500H13q-.5-2.500-2.500-3z" fill="#fff" /></svg>
    </ModeButton>
    <ModeButton>
      <svg width="20" height="20" viewBox="0 0 20 20" fill="none"><path d="M1 1h9v9H1z" fill="#d5d5d5" stroke="#b5b5b5" /><circle cx="10" cy="10" r="6.500" fill="#eee" stroke="#aaa" /><path d="M10 6a4 4 0 1 0 4 4h-4z" fill="#fff" stroke="#999" /><path d="M10.500 10.500h8v8h-8z" fill="#ccc" fillOpacity=".7" stroke="#aaa" /></svg>
    </ModeButton>
    <ModeButton>
      <svg width="20" height="20" viewBox="0 0 20 20" fill="none"><circle cx="11.500" cy="8.500" r="6.500" stroke="#999" strokeWidth=".9" /><path d="M11.500 5a3.500 3.500 0 1 0 3.500 3.500H11.500z" fill="#fff" stroke="#999" /><path d="M0 8.500h7M13 13.500l4 5" stroke="#999" strokeWidth="1.100" /></svg>
    </ModeButton>
  </>
);

const tree: { indent: number; arrow?: 'open' | 'closed'; w: number; eye?: 'on' | 'off'; icon: React.ReactNode; gap: number; text: string; grounded?: boolean }[] = [
  { indent: 40, arrow: 'closed', w: 150, icon: <Gear s={16} />, gap: 10, text: 'Document Settings' },
  { indent: 40, arrow: 'closed', w: 123, icon: <Folder />, gap: 15, text: 'Named Views' },
  { indent: 40, arrow: 'closed', w: 111, eye: 'off', icon: <Folder />, gap: 15, text: 'Origin' },
  { indent: 40, arrow: 'open', w: 128, eye: 'on', icon: <Folder />, gap: 15, text: 'Sketches' },
  { indent: 60, w: 119, eye: 'on', icon: <SketchSmall />, gap: 15, text: 'Sketch1' },
  { indent: 40, arrow: 'closed', w: 195, eye: 'on', icon: <Body />, gap: 15, text: 'Spur Gear (16 teeth):1', grounded: true },
  { indent: 40, arrow: 'closed', w: 195, eye: 'on', icon: <Body />, gap: 15, text: 'Spur Gear (32 teeth):1' },
];

const ribbonTabs: [string, number][] = [['SOLID', 64], ['SURFACE', 130], ['MESH', 66], ['SHEET METAL', 158], ['PLASTIC', 84], ['UTILITIES', 130]];

const groups: { name: string; w: number; icons: React.FC[]; on?: boolean }[] = [
  { name: 'CREATE', w: 300, icons: [SketchIcon, ExtrudeIcon, RevolveIcon, HoleIcon, PatternIcon, FormIcon] },
  { name: 'AUTOMATE', w: 111, icons: [AutomateIcon] },
  { name: 'MODIFY', w: 301, icons: [PressPullIcon, FilletIcon, ShellIcon, CombineIcon, SplitIcon, MoveIcon] },
  { name: 'ASSEMBLE', w: 110, icons: [() => <Ico><NewComponentArt /></Ico>, JointTileIcon], on: true },
  { name: 'CONSTRUCT', w: 116, icons: [ConstructIcon] },
  { name: 'INSPECT', w: 94, icons: [InspectIcon] },
  { name: 'INSERT', w: 108, icons: [BoltIcon, ImageIcon] },
  { name: 'SELECT', w: 90, icons: [SelectIcon] },
];

const Loupe = ({ frame }: { frame?: boolean }) => (
  <svg width="20" height="20" viewBox="0 0 20 20" fill="none">
    {frame && <rect x="2" y="2" width="16" height="16" stroke="#999" strokeDasharray="2 1.500" />}
    <path d="M11.500 11.500l6 6" stroke="#333" strokeWidth="2.600" />
    <circle cx="7.500" cy="7.500" r="5.800" fill="#e3eee9" stroke="#777" strokeWidth="1.100" />
    {!frame && <path d="M14 4.500h5M16.500 2v5M14 8.500h5" stroke="#444" strokeWidth="1" />}
  </svg>
);

const DarkCaret = styled(Caret)` color: #616161; `;
const PaleCaret = styled(Caret)` color: #929292; `;

export default function App() {
  return (
    <Screen>
      <Global />
      <TitleBar>
        <FusionLogo s={17} />
        <WindowTitle>Autodesk Fusion 360 (Education License)</WindowTitle>
        <WindowButton><svg width="12" height="12" viewBox="0 0 12 12"><path d="M0 6.500h11" stroke="#222" /></svg></WindowButton>
        <WindowButton><svg width="12" height="12" viewBox="0 0 12 12" fill="none" stroke="#222"><path d="M.5 3.500h8v8h-8zM3 3V.500h8.500V9H9" /></svg></WindowButton>
        <WindowButton><svg width="12" height="12" viewBox="0 0 12 12"><path d="M.5.500l11 11M11.500.500l-11 11" stroke="#222" strokeWidth="1.100" /></svg></WindowButton>
      </TitleBar>

      <DocBar>
        <QuickAccess>
          <QuickSlot $w={36}><svg width="16" height="16" viewBox="0 0 16 16" fill="#616161">{[0, 5.7, 11.4].map(y => [0, 5.700, 11.400].map(x => <rect key={`${x}${y}`} x={x} y={y} width="4.600" height="4.600" rx=".8" />))}</svg></QuickSlot>
          <QuickSlot $w={38}><svg width="15" height="18" viewBox="0 0 15 18" fill="#616161"><path d="M0 0h8.500v5.500H15V18H0zM10 0l5 4.500h-5z" /></svg></QuickSlot>
          <DarkCaret $ml={-5} />
          <QuickSlot $w={59}><svg width="17" height="16" viewBox="0 0 17 16"><path d="M0 0h15l2 2v14H0z" fill="#959595" /><path d="M3.500 0h9v5.500h-9zM3 9h11v7H3z" fill="#c9c9c9" /><path d="M5 1.500h2.500v3H5zM4.500 10.500h8V16h-2v-3h-2v3h-4z" fill="#959595" /></svg></QuickSlot>
          <QuickSlot $w={17}><svg width="15" height="14" viewBox="0 0 15 14" fill="none" stroke="#929292" strokeWidth="2.200"><path d="M6 1L1.800 5.500L6 10M2 5.500H9Q13.500 6 13.500 13" /></svg></QuickSlot>
          <PaleCaret $ml={5} />
          <QuickSlot $w={46}><svg width="15" height="14" viewBox="0 0 15 14" fill="none" stroke="#929292" strokeWidth="2.200"><path d="M9 1l4.200 4.500L9 10M13 5.500H6Q1.500 6 1.500 13" /></svg></QuickSlot>
          <PaleCaret $ml={-8.5} />
        </QuickAccess>
        <DocTab>
          <svg width="18" height="18" viewBox="0 0 18 18"><path d="M9 .5l8 4-8 4.500-8-4.500z" fill="#fbbf94" /><path d="M1 4.500L9 9v9l-8-4.500z" fill="#f98b47" /><path d="M17 4.500L9 9v9l8-4.500z" fill="#f96d0c" /></svg>
          <DocName>FM Gears v1</DocName>
          <svg width="11" height="11" viewBox="0 0 11 11"><path d="M1 1l9 9M10 1L1 10" stroke="#6b6b6b" strokeWidth="1.600" /></svg>
        </DocTab>
        <NewTab><svg width="15" height="15" viewBox="0 0 15 15"><path d="M7.500 0v15M0 7.500h15" stroke="#777" strokeWidth="2.600" /></svg></NewTab>
        <DocTools>
          <QuickSlot $w={44}><svg width="18" height="18" viewBox="0 0 18 18" fill="none"><path d="M5 2.200A7.700 7.700 0 1 0 13.500 2.500" stroke="#555" strokeWidth="2.300" /><path d="M4.500 11V7l2.500-3 2 1.500L11.500 1 13 2l-2 4 1 1 3.500-2.500 1 1.500-3.500 3v2.500L9.500 14z" fill="#555" /></svg></QuickSlot>
          <QuickSlot $w={30}><svg width="19" height="19" viewBox="0 0 19 19" fill="none"><circle cx="9.500" cy="9.500" r="8.700" stroke="#666" /><circle cx="9.500" cy="9.500" r="6.800" fill="#555" /><path d="M9.500 5v5h4" stroke="#ddd" strokeWidth="1.600" /></svg></QuickSlot>
          <QuickSlot $w={44}><svg width="18" height="19" viewBox="0 0 18 19"><path d="M1 14q3-2 3-7 1-4 4.500-4.500Q13 3 13 8q0 4 3 6zM6.500 15.500h4l-2 2.500z" fill="#555" /><circle cx="13.500" cy="4.500" r="3.500" fill={BLUE} /></svg></QuickSlot>
          <QuickSlot $w={30}><svg width="18" height="18" viewBox="0 0 18 18"><circle cx="9" cy="9" r="9" fill="#555" /><text x="9" y="14" fontSize="14" fontWeight="bold" fontFamily="Liberation Sans" textAnchor="middle" fill="#ddd">?</text></svg></QuickSlot>
          <QuickSlot $w={57}><svg width="26" height="28" viewBox="0 0 26 28"><defs><clipPath id="av"><ellipse cx="13" cy="14" rx="13" ry="14" /></clipPath></defs><g clipPath="url(#av)"><rect width="26" height="28" fill="#96a8cc" /><path d="M13 1q6 0 6 7 0 5-2.500 7.500V19q7 1.500 8.500 6v3H1v-3q2-4.500 8.500-6v-3.500Q7 13 7 8q0-7 6-7z" fill="#4c5a6e" /></g></svg></QuickSlot>
        </DocTools>
      </DocBar>

      <Ribbon>
        <WorkspaceButton>DESIGN<Caret $ml={5} /></WorkspaceButton>
        <RibbonMain>
          <TabRow>{ribbonTabs.map(([t, w], i) => <RibbonTab key={t} $w={w} $on={i === 0}>{t}</RibbonTab>)}</TabRow>
          <Groups>
            {groups.map(g => (
              <Group key={g.name} $w={g.w}>
                <IconRow>{g.icons.map((I, i) => <I key={i} />)}</IconRow>
                <GroupLabel $on={g.on}>{g.name}<Caret /></GroupLabel>
              </Group>
            ))}
          </Groups>
        </RibbonMain>
      </Ribbon>

      <Canvas>
        <Model />

        <BrowserPanel>
          <PanelBar><DoubleArrow /><PanelTitle $ml={10}>BROWSER</PanelTitle><RoundSign /></PanelBar>
          <Tree>
            <TreeRow $indent={20}>
              <Twisty><ArrowOpen /></Twisty>
              <TreeItem $w={174}>
                <IconSlot $w={24}><Eye /></IconSlot>
                <IconSlot $w={4}>{null}</IconSlot>
                <ActiveName><IconSlot $w={24}><AssemblyIcon /></IconSlot><IconSlot $w={13}>{null}</IconSlot>FM Gears v1</ActiveName>
                <IconSlot $w={25}><svg width="15" height="15" viewBox="0 0 15 15"><circle cx="7.500" cy="7.500" r="6.800" fill="#e4e8ef" stroke="#777" /><circle cx="7.500" cy="7.500" r="2.700" fill="#333" /></svg></IconSlot>
              </TreeItem>
            </TreeRow>
            {tree.map(n => (
              <TreeRow key={n.text} $indent={n.indent}>
                <Twisty>{n.arrow === 'closed' ? <ArrowClosed /> : n.arrow === 'open' ? <ArrowOpen /> : null}</Twisty>
                <TreeItem $w={n.w}>
                  {n.eye && <IconSlot $w={25}><Eye off={n.eye === 'off'} /></IconSlot>}
                  <IconSlot $w={n.eye ? 30 : 22}>{n.icon}</IconSlot>
                  <IconSlot $w={n.eye ? 10 : n.gap}>{null}</IconSlot>
                  {n.text}
                  {n.grounded && (
                    <Grounded width="168" height="6" viewBox="0 0 168 6">
                      {Array.from({ length: 25 }, (_, i) => <path key={i} d={`M${i * 6.7 + 1} 5l3-3.500`} stroke="#7c8bb5" strokeWidth="2" />)}
                    </Grounded>
                  )}
                </TreeItem>
              </TreeRow>
            ))}
          </Tree>
        </BrowserPanel>

        <CommentsPanel><PanelTitle $ml={22}>COMMENTS</PanelTitle><RoundSign plus /></CommentsPanel>

        <NavBar>
          <IconSlot $w={24}><svg width="18" height="18" viewBox="0 0 18 18" fill="none" stroke="#666"><ellipse cx="9" cy="10" rx="8" ry="3.600" /><ellipse cx="9" cy="9" rx="4" ry="8" /><path d="M12.500 5.500l3 3h-3z" fill="#333" stroke="none" /><circle cx="9" cy="10" r="1.200" fill="#58a" stroke="none" /></svg></IconSlot>
          <IconSlot $w={12}><Caret $ml={0} /></IconSlot>
          <IconSlot $w={27}><svg width="17" height="17" viewBox="0 0 17 17" fill="none"><path d="M1 6h15v10H1z" fill="#d5d8dd" stroke="#777" /><path d="M4 8.500h9v5H4z" fill="#777" /><path d="M2 4h10M3 2l3-1v2h6" stroke="#777" /></svg></IconSlot>
          <IconSlot $w={31}><svg width="18" height="18" viewBox="0 0 18 18"><path d="M6 16Q2 10 .8 9q1-1.500 3 .5L5.500 11 3.500 3.500q1-1.200 2 .2L7 8 6.800 1.500q1-1.300 1.800 0L9.500 8l1.200-6q1.200-.9 1.600.4L12 8.500l2-4.500q1.400-.5 1.300 1L14 12l-1.500 4.500z" fill="#fff" stroke="#555" strokeWidth=".9" /></svg></IconSlot>
          <IconSlot $w={28}><Loupe /></IconSlot>
          <IconSlot $w={28}><Loupe frame /></IconSlot>
          <IconSlot $w={10}><Caret $ml={0} /></IconSlot>
          <IconSlot $w={25}><svg width="18" height="18" viewBox="0 0 19 18"><rect x=".5" y=".5" width="18" height="13" fill="#d5d8dd" stroke="#777" /><rect x="2.500" y="2.500" width="14" height="9" fill="#7ba4d6" /><path d="M6 14h7l2 3.500H4z" fill="#888" /></svg></IconSlot>
          <IconSlot $w={8}><Caret $ml={-1} /></IconSlot>
          <IconSlot $w={31}><svg width="17" height="17" viewBox="0 0 17 17" fill="none"><rect x=".5" y=".5" width="16" height="16" fill="#eee" stroke="#777" /><path d="M3.500 0v17M6 0v17M8.500 0v17M11 0v17M13.500 0v17M0 3.500h17M0 6h17M0 8.500h17M0 11h17M0 13.500h17" stroke="#777" strokeWidth=".9" /></svg></IconSlot>
          <IconSlot $w={5}><Caret $ml={-8} /></IconSlot>
          <IconSlot $w={26}><svg width="17" height="15" viewBox="0 0 17 15"><rect width="17" height="15" fill="#5d7fab" /><path d="M1.500 1.500H8V7H1.500zM9.200 1.500h6.300V7H9.200zM1.500 8.200H8v5.300H1.500zM9.200 8.200h6.300v5.300H9.200z" fill="#8fb0da" /></svg></IconSlot>
          <IconSlot $w={4}><Caret $ml={-2} /></IconSlot>
        </NavBar>

        <Status>1 Face | Area : 264.627 mm^2</Status>

        <ViewCube width="64" height="66" viewBox="0 0 64 66" fontFamily="Open Sans" fill="none">
          <rect x="13.500" y="12.500" width="38.500" height="38.500" fill="#f7f7f8" stroke="#b0b0b0" strokeWidth="1.200" />
          <rect x="20" y="19" width="25" height="25" fill="#e8eaf0" />
          <text x="24" y="35.500" fontSize="10" fontWeight="bold" fill="#9a9ca2" textLength="17" lengthAdjust="spacingAndGlyphs">TOP</text>
          <g fontSize="10.500" fontWeight="bold">
            <text x="8" y="14" fill="#9df59a" textLength="6" lengthAdjust="spacingAndGlyphs">Y</text>
            <text x="55.500" y="19" fill="#f99a9a" textLength="6" lengthAdjust="spacingAndGlyphs">X</text>
            <text x="13" y="61" fill="#9a97f5" textLength="6.500" lengthAdjust="spacingAndGlyphs">Z</text>
          </g>
        </ViewCube>

        <Menu>
          {menuItems.map((m, i) => m ? (
            <MenuItem key={m[1]}>
              <svg width="18" height="18" viewBox="0 0 18 18" fill="none">{menuGlyphs[m[0]]}</svg>
              <MenuText>{m[1]}</MenuText>
              {m[2]}
            </MenuItem>
          ) : <MenuRule key={i} />)}
        </Menu>
        <Tooltip>Select a Snap point on Component 2</Tooltip>

        <JointPanel>
          <JointBar><RoundSign /><PanelTitle $ml={5}>JOINT</PanelTitle><DoubleArrow flip /></JointBar>
          <JointBody>
            <JointTabs><JointTab $w={61} $on>Position</JointTab><JointTab $w={53}>Motion</JointTab></JointTabs>
            <Fields>
              <SectionHead><HeadArrow />Component 1 - Spur Gear (16 teeth):1</SectionHead>
              <Field><FieldName>Origin Mode</FieldName><OriginModes /></Field>
              <Field>
                <FieldName>Snap</FieldName>
                <PickButton><svg width="11" height="18" viewBox="-1 -1 13 20"><CursorShape x={0} y={0} fill="#eee" stroke="#666" /></svg>1 selected</PickButton>
                <ClearPick width="11" height="11" viewBox="0 0 11 11"><path d="M1 1l9 9M10 1L1 10" stroke="#555" strokeWidth="2.200" /></ClearPick>
              </Field>
              <SectionHead><HeadArrow />Component 2</SectionHead>
              <Field><FieldName>Origin Mode</FieldName><OriginModes /></Field>
              <Field>
                <FieldName>Snap</FieldName>
                <PickButton $on><svg width="11" height="18" viewBox="-1 -1 13 20"><CursorShape x={0} y={0} stroke="#8a6a6a" /></svg>Select</PickButton>
              </Field>
            </Fields>
            <Footer>
              <svg width="14" height="14" viewBox="0 0 14 14"><circle cx="7" cy="7" r="7" fill="#111" /><path d="M5.500 6H8v4.500h1M5.500 10.800H9" stroke="#fff" strokeWidth="1.400" fill="none" /><circle cx="7.200" cy="3.500" r="1.200" fill="#fff" /></svg>
              <DialogButton $off>OK</DialogButton>
              <DialogButton>Cancel</DialogButton>
            </Footer>
          </JointBody>
        </JointPanel>
      </Canvas>

      <Timeline>
        <Transport>
          {['M1 1h2.500v13H1zM13.500 1v13L4 7.500z', 'M11 1v13L0 7.500zM12 5h2.500v6H12z', 'M1 0l14 7.800L1 16z', 'M4 1v13l11-6.500zM.5 5H3v6H.5z', 'M1.500 1v13L11 7.500zM11.500 1H14v13h-2.500z'].map(d => (
            <TransportButton key={d}><svg width="16" height="16" viewBox="0 0 16 16"><path d={d} fill="#5f5f5f" /></svg></TransportButton>
          ))}
        </Transport>
        <svg width="116" height="48" viewBox="160 707.500 116 48" fill="none">
          <path d="M163.500 717l3.500-4M169 717l4-4M175 717l4-4" stroke="#444" strokeWidth="2.500" />
          {[163.5, 170.5, 177.5, 190.500, 197.500, 204.500].map((x, i) => <rect key={x} x={x} y="728" width="3.600" height="6.500" fill={i % 3 === 2 ? '#aaa' : '#fff'} stroke="#666" strokeWidth="1.100" />)}
          <rect x="217.500" y="722.500" width="8" height="17" fill="#fff" stroke="#888" /><path d="M225 722h10v8h-10z" fill={SKY} />
          <g transform="translate(243.500 721)"><SketchSmall /></g>
          <path d="M172 749.500H253.500V743M226.500 749.500V743" stroke="#c4c4c4" strokeWidth="2" />
          {[165, 192].map(x => <g key={x}><rect x={x} y="744" width="11" height="11" fill="#777" /><path d={`M${x + 2.5} 749.500h6M${x + 5.5} 746.500v6`} stroke="#fff" strokeWidth="1.700" /></g>)}
          <path d="M259.500 715.500h13.500v3l-5 5h-3.500l-5-5z" fill="#5f5f5f" /><path d="M266.300 720v31" stroke="#5f5f5f" strokeWidth="2.200" />
        </svg>
        <Spacer />
        <Gear s={18} c="#808080" />
      </Timeline>

      <Taskbar>
        <StartButton><svg width="18" height="18" viewBox="0 0 18 18" fill="#fff"><path d="M0 2.500L7.800 1.400V8.600H0zM8.600 1.300L18 0v8.600H8.600zM0 9.400h7.800v7.200L0 15.500zM8.600 9.400H18V18l-9.400-1.300z" /></svg></StartButton>
        <SearchBox>
          <svg width="19" height="20" viewBox="0 0 19 20" fill="none" stroke="#e8e8e8" strokeWidth="1.500"><circle cx="12" cy="7.500" r="6" /><path d="M7.800 12L.8 19.500" /></svg>
          <SearchText>Type here to search</SearchText>
          <SearchArt>
            <svg width="34" height="27" viewBox="0 0 34 27"><path d="M11 4q0-4 4-4h5q3 0 3 4h-3V2.500h-6V4z" fill="#222" /><rect y="3.500" width="34" height="12" rx="1.500" fill="#e8900c" /><path d="M0 15.500h34V25a2 2 0 0 1-2 2H2a2 2 0 0 1-2-2z" fill="#b96a06" /><rect x="14" y="12.500" width="6" height="6.500" fill="#fcdc3a" /></svg>
          </SearchArt>
        </SearchBox>
        <TaskSlot><svg width="19" height="18" viewBox="0 0 19 18" fill="none" stroke="#e8e8e8" strokeWidth="1.300"><rect x="1.500" y="4.500" width="10.500" height="9" /><path d="M.8 0v1.500H13V0M.8 18v-1.500H13V18M17.500 0v4M17.500 9v9" /><rect x="16.500" y="5.500" width="2" height="2" fill="#fff" stroke="none" /></svg></TaskSlot>
        <TaskSlot><svg width="24" height="20" viewBox="0 0 24 20"><path d="M0 1a1 1 0 0 1 1-1h8l2 2.500h12a1 1 0 0 1 1 1V18H0z" fill="#e0a321" /><path d="M0 5h24v13.500H0z" fill="#fcd462" /><path d="M4 19.500v-6a2 2 0 0 1 2-2h12a2 2 0 0 1 2 2v6h-4.500V15h-7v4.500z" fill="#3f92d2" /></svg></TaskSlot>
        <TaskSlot><svg width="26" height="26" viewBox="0 0 26 26"><path d="M7 5V1h12v4" stroke="#35a8e0" strokeWidth="1.700" fill="none" /><path d="M0 4h26v19a3 3 0 0 1-3 3H3a3 3 0 0 1-3-3z" fill="#f5f5f5" /><path d="M7.500 9.500h5v5h-5z" fill="#e8502a" /><path d="M13.500 9.500h5v5h-5z" fill="#7cb518" /><path d="M7.500 15.500h5v5h-5z" fill="#1a9be0" /><path d="M13.500 15.500h5v5h-5z" fill="#f9b50b" /></svg></TaskSlot>
        <TaskSlot><svg width="28" height="26" viewBox="0 0 28 26"><path d="M0 8L14 0l14 8-4 4H4z" fill="#0d5aa5" /><path d="M3 7.500h22V16H3z" fill="#f2f6fa" /><path d="M0 8.500L14 17 28 8.500V25H0z" fill="#35b2f0" /><path d="M0 25l28-16.500V25z" fill="#1b8fdd" /></svg></TaskSlot>
        <TaskSlot><svg width="28" height="24" viewBox="0 0 28 24"><ellipse cx="10" cy="8.500" rx="9.800" ry="8" fill="#3edb70" /><path d="M4 14l-1 5 5-3z" fill="#3edb70" /><circle cx="6.500" cy="6" r="1.300" fill="#1b6a37" /><circle cx="13" cy="6" r="1.300" fill="#1b6a37" /><ellipse cx="19.500" cy="15" rx="8.300" ry="6.800" fill="#e8e8e8" /><path d="M23 20l3 3-.5-5z" fill="#e8e8e8" /><circle cx="16.500" cy="13" r="1" fill="#777" /><circle cx="22.500" cy="13" r="1" fill="#777" /></svg></TaskSlot>
        <TaskSlot><svg width="28" height="28" viewBox="-14 -14 28 28"><circle r="13.500" fill="#33a853" /><path d="M-11.700-6.700A13.500 13.500 0 0 1 11.700-6.700H0L-5.800 3.400z" fill="#e33b2e" /><path d="M11.700-6.700A13.500 13.500 0 0 1 0 13.500L5.800 3.400 0-6.700z" fill="#fcc31e" /><circle r="6.600" fill="#fff" /><circle r="5.200" fill="#2d74e8" /></svg></TaskSlot>
        <TaskSlot $open><svg width="20" height="24" viewBox="0 0 20 24" fill="none" stroke="#f08f92" strokeWidth="1.600"><circle cx="10" cy="13" r="8.500" /><path d="M2 22L12 2h2v19M6 14.500h10l-3-2v4z" strokeWidth="2" /></svg></TaskSlot>
        <TaskSlot $open $active><FusionLogo s={25} /></TaskSlot>
        <TaskSlot $open><svg width="27" height="25" viewBox="0 0 27 25"><rect x="7" width="20" height="7" rx="1" fill="#41a5ee" /><rect x="7" y="6" width="20" height="7" fill="#2b7cd3" /><rect x="7" y="12" width="20" height="6.500" fill="#185abd" /><path d="M7 18h20v5a1.500 1.500 0 0 1-1.500 1.500h-17A1.500 1.500 0 0 1 7 23z" fill="#103f91" /><rect y="6" width="14" height="13" rx="1" fill="#1b5cbe" /><text x="7" y="16" fontFamily="Liberation Sans" fontWeight="bold" fontSize="10" textAnchor="middle" fill="#fff">W</text></svg></TaskSlot>
        <TaskSlot $open><svg width="26" height="27" viewBox="0 0 26 27" fill="none"><ellipse cx="7" cy="16" rx="6" ry="4" fill="#8d9296" /><ellipse cx="12" cy="7.500" rx="10.500" ry="6.500" fill="#f4f4f4" stroke="#e0524f" strokeWidth="1.500" transform="rotate(-15 12 7.500)" /><path d="M11 3l3 14M6 11l12 5" stroke="#999" strokeWidth="1.800" /><ellipse cx="20.500" cy="17.500" rx="4" ry="3" stroke="#3d93cf" strokeWidth="2" /><ellipse cx="15.500" cy="22" rx="2.800" ry="4" stroke="#3d93cf" strokeWidth="2" /></svg></TaskSlot>
        <Tray>
          <svg width="27" height="19" viewBox="0 0 27 19" fill="none" stroke="#eee" strokeWidth="1.700"><path d="M1 1h22v14q0 3-2 3H3q-2 0-2-3zM23 4h3v12q0 2-3 2" /><path d="M4.500 5h15M14 9h6M14 12.500h6" /><rect x="5" y="8.800" width="5.500" height="4.700" /></svg>
          <Temperature>28°C</Temperature>
          <TraySlot $w={28}><svg width="14" height="8" viewBox="0 0 14 8" fill="none" stroke="#eee" strokeWidth="1.300"><path d="M.7 7.300L7 1l6.300 6.300" /></svg></TraySlot>
          <TraySlot $w={42}><svg width="19" height="13" viewBox="0 0 19 13" fill="none" stroke="#eee" strokeWidth="1.200"><path d="M5 3.500h12v8H5z" /><path d="M8 5.500h7.500v4H8z" fill="#eee" /><path d="M18.500 6v3M1.500 0v2.500M4.500 0v2.500M.8 3h4.500v2.500H1zM3 5.500V8" /></svg></TraySlot>
          <TraySlot $w={34}><svg width="15" height="14" viewBox="0 0 15 14" fill="none" stroke="#c9ccd2" strokeWidth="1.200"><path d="M1 13Q1 2 14 1M4.500 13Q5 6 14 4.500M8 13Q8.500 8.500 14 8" /><circle cx="12.500" cy="12" r="1.600" fill="#eee" stroke="none" /></svg></TraySlot>
          <TraySlot $w={36}><svg width="17" height="14" viewBox="0 0 17 14" fill="none" stroke="#eee" strokeWidth="1.200"><path d="M1 5h2.500L7 1.500v11L3.500 9H1z" /><path d="M9.500 5q1.200 2 0 4M12 3.500q2.200 3.500 0 7M14.500 2q3 5 0 10" /></svg></TraySlot>
          <TraySlot $w={44}><svg width="16" height="15" viewBox="0 0 16 15" fill="none" stroke="#eee" strokeWidth="1.200"><path d="M6 9L12 1l2 1.500L8 10.500l-3 1zM6 8Q1 7 1 11t4 3q4-1 5-5t5-2" /></svg></TraySlot>
          <Clock>4:39 PM<br />11/4/2023</Clock>
          <Notice>
            <svg width="19" height="18" viewBox="0 0 19 18"><path d="M0 0h19v13.500h-8L7 17.500v-4H0z" fill="#fff" /><path d="M3.500 3.500h12M3.500 6.500h12M3.500 9.500h8" stroke="#26324a" strokeWidth="1.200" /></svg>
            <Badge>1</Badge>
          </Notice>
        </Tray>
        <ShowDesktop />
      </Taskbar>
    </Screen>
  );
}
